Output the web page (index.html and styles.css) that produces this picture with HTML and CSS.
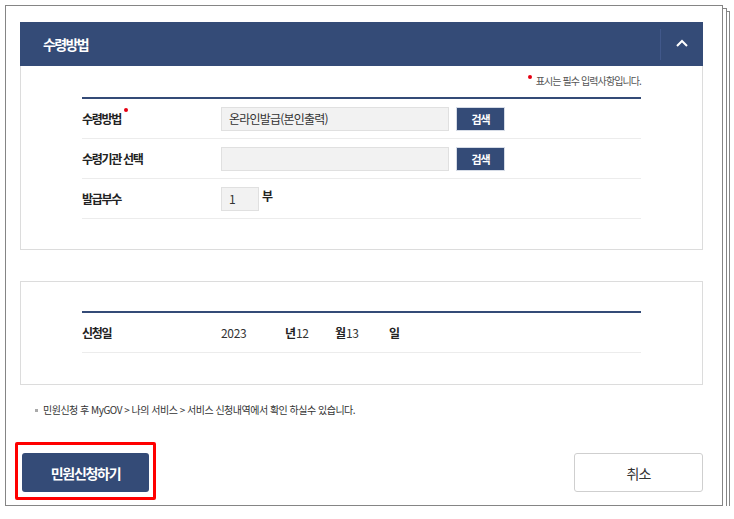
FILE: index.html
```html
<!DOCTYPE html>
<html lang="ko">
<head>
<meta charset="utf-8">
<title>수령방법</title>
<link rel="stylesheet" href="styles.css">
</head>
<body>
<div class="sheet">
  <div class="section-head">
    <h2 class="section-title">수령방법</h2>
    <button class="toggle" type="button" aria-label="접기">
      <svg width="12" height="8" viewBox="0 0 12 8"><polyline points="1,7 6,2 11,7" fill="none" stroke="#fff" stroke-width="2"/></svg>
    </button>
  </div>
  <div class="panel panel-first">
    <p class="req-note"><span class="dot"></span>표시는 필수 입력사항입니다.</p>
    <div class="table">
      <div class="row">
        <div class="label">수령방법<span class="dot dot-label"></span></div>
        <div class="field">
          <div class="input wide">온라인발급(본인출력)</div>
          <button class="search" type="button">검색</button>
        </div>
      </div>
      <div class="row">
        <div class="label">수령기관 선택</div>
        <div class="field">
          <div class="input wide"></div>
          <button class="search" type="button">검색</button>
        </div>
      </div>
      <div class="row">
        <div class="label">발급부수</div>
        <div class="field">
          <div class="input small">1</div>
          <span class="unit">부</span>
        </div>
      </div>
    </div>
  </div>
  <div class="panel panel-second">
    <div class="table">
      <div class="row">
        <div class="label">신청일</div>
        <div class="field date">
          <span class="val v-year">2023</span><span class="unit-b">년</span><span class="val v-month">12</span><span class="unit-b">월</span><span class="val v-day">13</span><span class="unit-b">일</span>
        </div>
      </div>
    </div>
  </div>
  <p class="info"><span class="bullet"></span>민원신청 후 MyGOV &gt; 나의 서비스 &gt; 서비스 신청내역에서 확인 하실수 있습니다.</p>
  <div class="actions">
    <div class="highlight">
      <button class="btn-primary" type="button">민원신청하기</button>
    </div>
    <button class="btn-cancel" type="button">취소</button>
  </div>
</div>
</body>
</html>
```
FILE: styles.css
```css
* { box-sizing: border-box; }
html { background: #fff; }
html, body { margin: 0; padding: 0; }
body {
  font-family: "Noto Sans CJK KR", "Noto Sans", sans-serif;
  color: #222;
}
button { font-family: inherit; cursor: pointer; }

.sheet {
  position: relative;
  margin: 5px 0 0 5px;
  width: 718px;
  height: 501px;
  border: 1px solid #858585;
  background: #fff;
  padding: 16px 19px 0 14px;
}
.sheet::before,
.sheet::after {
  content: "";
  position: absolute;
  z-index: -1;
  width: 718px;
  height: 501px;
  border: 1px solid #858585;
  background: #fff;
}
.sheet::before { left: 4px; top: 5px; }
.sheet::after { left: 1px; top: 2px; }

.section-head {
  height: 44px;
  background: #344b77;
  display: flex;
  align-items: center;
  justify-content: space-between;
}
.section-title {
  margin: 0 0 0 23px;
  font-size: 14px;
  font-weight: bold;
  letter-spacing: -1.6px;
  color: #fff;
  line-height: 20px;
}
.toggle {
  width: 43px;
  height: 31px;
  border: 0;
  border-left: 1px solid #41588a;
  background: transparent;
  padding: 0;
  display: flex;
  align-items: center;
  justify-content: center;
}
.toggle svg { display: block; margin-top: -2px; }

.panel {
  border: 1px solid #dcdcdc;
  padding: 0 61px;
}
.panel-first {
  border-top: 0;
  padding-top: 8px;
  padding-bottom: 30px;
}
.panel-second {
  margin-top: 31px;
  padding-top: 29px;
  padding-bottom: 31px;
}

.req-note {
  margin: 0 0 9px;
  text-align: right;
  font-size: 10px;
  line-height: 14px;
  letter-spacing: -0.9px;
  color: #555;
}
.dot {
  display: inline-block;
  width: 4px;
  height: 4px;
  border-radius: 50%;
  background: #e60012;
  vertical-align: top;
  margin: 0 4px 0 0;
}
.req-note .dot { margin-top: 1px; }
.dot-label { margin: -3px 0 0 3px; }

.table { border-top: 2px solid #344b77; }
.row {
  display: flex;
  align-items: center;
  height: 40px;
  border-bottom: 1px solid #ececec;
}
.label {
  width: 139px;
  font-size: 12px;
  font-weight: bold;
  letter-spacing: -1.3px;
  color: #222;
  line-height: 16px;
}
.field {
  display: flex;
  align-items: center;
}
.input {
  height: 24px;
  background: #f2f2f2;
  border: 1px solid #e0e0e0;
  font-size: 12px;
  letter-spacing: -0.8px;
  color: #333;
  line-height: 22px;
  padding-left: 7px;
}
.input.wide { width: 228px; }
.input.small { width: 38px; }
.search {
  margin-left: 7px;
  width: 49px;
  height: 24px;
  border: 1px solid #d5dbe6;
  background: #344b77;
  color: #fff;
  font-size: 11px;
  font-weight: bold;
  letter-spacing: -1px;
  padding: 0;
}
.unit {
  margin: -6px 0 0 3px;
  font-size: 12px;
  font-weight: bold;
  color: #222;
}

.date { font-size: 12px; color: #333; }
.val { display: inline-block; letter-spacing: -0.3px; }
.v-year { width: 64px; }
.v-month { width: 39px; }
.v-day { width: 43px; }
.unit-b { display: inline-block; width: 11px; font-weight: bold; color: #222; }

.info {
  margin: 18px 0 0 15px;
  font-size: 10px;
  line-height: 14px;
  letter-spacing: -0.5px;
  color: #333;
  display: flex;
  align-items: center;
}
.bullet {
  display: inline-block;
  width: 3px;
  height: 3px;
  background: #aaa;
  margin-right: 5px;
}

.actions {
  margin-top: 36px;
  display: flex;
  justify-content: space-between;
  align-items: center;
}
.highlight {
  position: relative;
  margin-left: 2px;
}
.highlight::after {
  content: "";
  position: absolute;
  left: -7px;
  right: -7px;
  top: -11px;
  bottom: -8px;
  border: 3px solid #ff0000;
  border-radius: 2px;
  pointer-events: none;
}
.btn-primary {
  display: block;
  width: 127px;
  height: 39px;
  border: 0;
  border-radius: 3px;
  background: #344b77;
  color: #fff;
  font-size: 14px;
  font-weight: bold;
  letter-spacing: -1.3px;
  padding: 0;
}
.btn-cancel {
  width: 129px;
  height: 39px;
  border: 1px solid #cfcfcf;
  border-radius: 3px;
  background: #fff;
  color: #333;
  font-size: 14px;
  letter-spacing: -1px;
  padding: 0;
}
```
